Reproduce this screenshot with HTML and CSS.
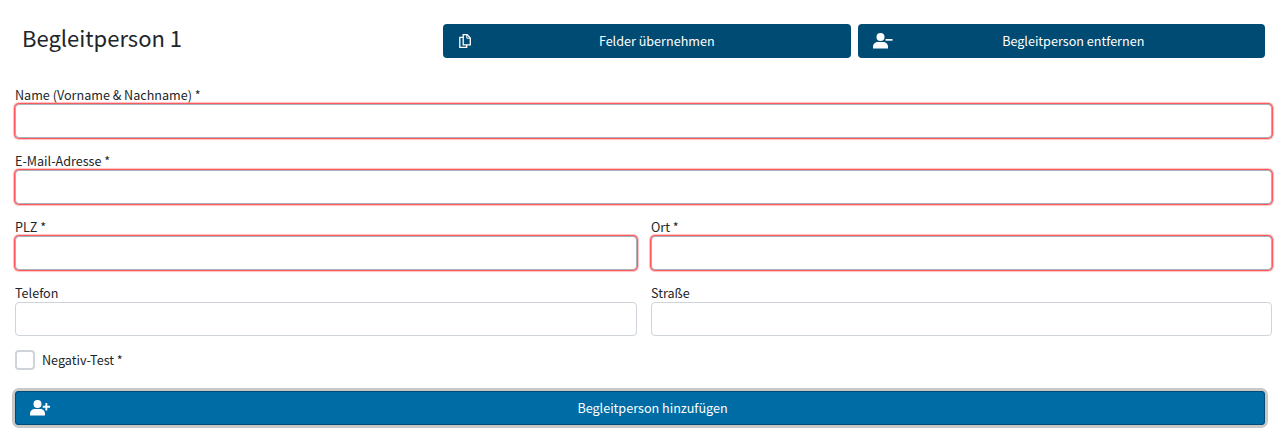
FILE: index.html
```html
<!DOCTYPE html>
<html lang="de">
<head>
<meta charset="utf-8">
<title>Begleitperson</title>
<link rel="stylesheet" href="styles.css">
</head>
<body>
<form class="page">
  <header class="head">
    <h2 class="title">Begleitperson 1</h2>
    <div class="actions">
      <button type="button" class="btn btn-dark btn-copy">
        <svg class="icon" viewBox="0 0 14 16" width="14" height="16"><g fill="none" stroke="currentColor" stroke-width="1.300"><path d="M5.200 1.700h3.900l3.200 3.200v6.900H5.200z"/><path d="M5.200 4.300H1.800v10.100h6.900v-2.600"/></g><path d="M8.800 2v3.200H12" fill="none" stroke="currentColor" stroke-width="1"/></svg>
        <span class="btn-text">Felder übernehmen</span>
      </button>
      <button type="button" class="btn btn-dark btn-remove">
        <svg class="icon" viewBox="0 0 20 16" width="20" height="16"><circle cx="7.500" cy="4" r="4" fill="currentColor"/><path d="M0 15.500v-1.700C0 11 2.300 9 5 9h5c2.700 0 5 2 5 4.800v1.700z" fill="currentColor"/><rect x="12.500" y="6" width="7" height="1.700" fill="currentColor"/></svg>
        <span class="btn-text">Begleitperson entfernen</span>
      </button>
    </div>
  </header>

  <div class="grid">
    <div class="field wide"><label class="label" for="n">Name (Vorname &amp; Nachname) *</label><input id="n" class="input invalid" type="text"></div>
    <div class="field wide"><label class="label" for="e">E-Mail-Adresse *</label><input id="e" class="input invalid" type="text"></div>
    <div class="field"><label class="label" for="p">PLZ *</label><input id="p" class="input invalid" type="text"></div>
    <div class="field"><label class="label" for="o">Ort *</label><input id="o" class="input invalid" type="text"></div>
    <div class="field"><label class="label" for="t">Telefon</label><input id="t" class="input" type="text"></div>
    <div class="field"><label class="label" for="s">Straße</label><input id="s" class="input" type="text"></div>
  </div>

  <label class="check"><span class="box"></span><span class="check-text">Negativ-Test *</span></label>

  <button type="button" class="btn btn-add">
    <svg class="icon" viewBox="0 0 20 16" width="20" height="16"><circle cx="7.500" cy="4" r="4" fill="currentColor"/><path d="M0 15.500v-1.700C0 11 2.300 9 5 9h5c2.700 0 5 2 5 4.800v1.700z" fill="currentColor"/><path d="M12.700 5.800h2.700V3.100h1.900v2.700H20v1.900h-2.700v2.700h-1.900V7.700h-2.700z" fill="currentColor"/></svg>
    <span class="btn-text">Begleitperson hinzufügen</span>
  </button>
</form>
</body>
</html>
```
FILE: styles.css
```css
* { box-sizing: border-box; }
html, body { margin: 0; padding: 0; background: #fff; }
body {
  font-family: "Noto Sans CJK SC", "Source Sans Pro", "Noto Sans", sans-serif;
  font-size: 12.6px;
  color: #212529;
}
.page {
  display: flex;
  flex-direction: column;
  padding: 24px 13px 17px 15px;
}
.head {
  display: flex;
  align-items: center;
  justify-content: space-between;
  height: 34px;
  margin-bottom: 27px;
}
.title {
  margin: 0 0 8px 7px;
  font-size: 22px;
  font-weight: 400;
  line-height: 28px;
  color: #212529;
}
.actions {
  display: flex;
  gap: 7px;
  width: 822px;
  margin-right: 7px;
}
.btn {
  display: flex;
  align-items: center;
  border: 0;
  border-radius: 4px;
  padding: 0 15px;
  color: #fff;
  font: inherit;
  font-size: 12.6px;
}
.btn-dark {
  flex: 1;
  height: 34px;
  background: #004b73;
}
.btn-text { flex: 1; text-align: center; padding-bottom: 2px; }
.icon { flex: none; display: block; }
.btn-copy .btn-text { margin-left: 6px; }
.btn-remove .btn-text { margin-left: 4px; }
.grid {
  display: grid;
  grid-template-columns: 622px 621px;
  column-gap: 14px;
  row-gap: 13px;
}
.wide { grid-column: 1 / -1; }
.field { display: flex; flex-direction: column; }
.label { height: 19px; line-height: 20px; }
.input {
  display: block;
  width: 100%;
  height: 34px;
  border: 1px solid #a9b1ba;
  border-radius: 4px;
  background: #fff;
  outline: 0;
  padding: 0 8px;
}
.input:not(.invalid) { border-color: #ced4da; }
.invalid {
  box-shadow: 0 0 0 1px #ff5a5f, 0 0 1px 2px rgba(255, 110, 115, 0.45);
}
.check {
  display: flex;
  align-items: center;
  gap: 7px;
  height: 20px;
  margin-top: 14px;
}
.check-text { padding-bottom: 2px; }
.box {
  width: 20px;
  height: 20px;
  border: 2px solid #ced4da;
  border-radius: 4px;
  background: #fff;
}
.btn-add {
  width: 1250px;
  height: 34px;
  margin-top: 21px;
  background: #006ca6;
  box-shadow: inset 0 0 0 1px #004b73, 0 0 0 3px #c8c8c8;
}
.btn-add .btn-text { margin-left: 5px; }
```
